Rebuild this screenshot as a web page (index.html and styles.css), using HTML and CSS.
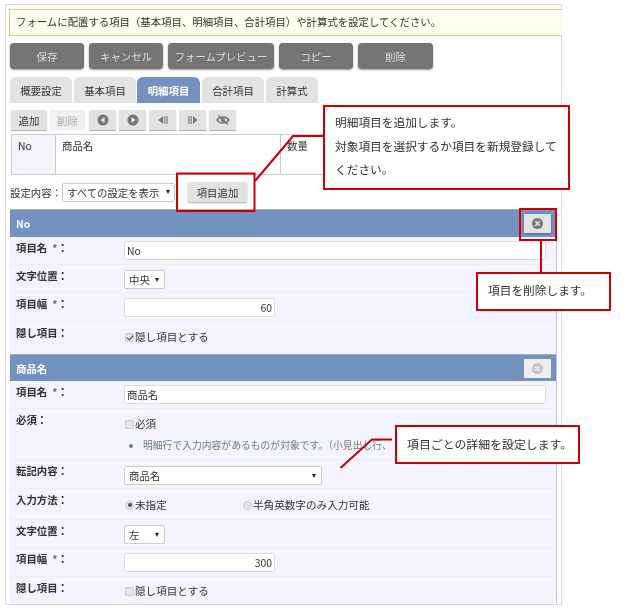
FILE: index.html
```html
<!DOCTYPE html>
<html lang="ja">
<head>
<meta charset="utf-8">
<title>フォーム設定</title>
<link rel="stylesheet" href="styles.css">
</head>
<body>
<div class="frame">
  <div class="notice">フォームに配置する項目（基本項目、明細項目、合計項目）や計算式を設定してください。</div>
  <div class="actions">
    <button class="act w74">保存</button>
    <button class="act w74">キャンセル</button>
    <button class="act w107">フォームプレビュー</button>
    <button class="act w74">コピー</button>
    <button class="act w75">削除</button>
  </div>
  <div class="tabs">
    <span class="tab">概要設定</span>
    <span class="tab">基本項目</span>
    <span class="tab on">明細項目</span>
    <span class="tab">合計項目</span>
    <span class="tab short">計算式</span>
  </div>
  <div class="tools">
    <button class="tool txt">追加</button>
    <button class="tool txt off">削除</button>
    <button class="tool first"><svg width="12" height="12" viewBox="0 0 12 12"><circle cx="6" cy="6" r="5.500" fill="#777"/><path d="M7.500 3.200v5.600L3.600 6z" fill="#eee"/></svg></button>
    <button class="tool"><svg width="12" height="12" viewBox="0 0 12 12"><circle cx="6" cy="6" r="5.500" fill="#777"/><path d="M4.500 3.200v5.600L8.400 6z" fill="#eee"/></svg></button>
    <button class="tool"><svg width="12" height="12" viewBox="0 0 12 12"><path d="M6 2v8L1.500 6z" fill="#777"/><path d="M7.200 2h1.300v8H7.200zM9.500 2h1.300v8H9.500z" fill="#888"/></svg></button>
    <button class="tool"><svg width="12" height="12" viewBox="0 0 12 12"><path d="M6 2v8l4.500-4z" fill="#777"/><path d="M1.200 2h1.300v8H1.200zM3.500 2h1.300v8H3.500z" fill="#888"/></svg></button>
    <button class="tool"><svg width="14" height="12" viewBox="0 0 14 12"><path d="M1 6c3-4 9-4 12 0-3 4-9 4-12 0z" fill="none" stroke="#777" stroke-width="1.300"/><circle cx="7" cy="6" r="2" fill="#777"/><path d="M2.500 1.500l9.500 9" stroke="#777" stroke-width="1.300"/></svg></button>
  </div>
  <div class="grid-head">
    <div class="cell c-no">No</div>
    <div class="cell c-name">商品名</div>
    <div class="cell c-qty">数量</div>
  </div>
  <div class="setting">
    <span class="setting-label">設定内容：</span>
    <span class="select s-all"><span>すべての設定を表示</span><i class="arrow"></i></span>
    <button class="add">項目追加</button>
  </div>

  <section class="panel">
    <header class="bar"><span>No</span><button class="del"><svg width="13" height="13" viewBox="0 0 13 13"><circle cx="6.500" cy="6.500" r="5.500" fill="#777"/><path d="M4.300 4.300l4.400 4.400M8.700 4.300l-4.400 4.400" stroke="#e4e4e4" stroke-width="1.500"/></svg></button></header>
    <div class="row h28"><label class="lab">項目名<em>*</em>：</label><input class="inp full mt4" value="No"></div>
    <div class="row h28"><label class="lab">文字位置：</label><span class="select s-small mt5"><span>中央</span><i class="arrow"></i></span></div>
    <div class="row h29"><label class="lab">項目幅<em>*</em>：</label><input class="inp num mt5" value="60"></div>
    <div class="row h32 last"><label class="lab">隠し項目：</label><span class="opt mt7"><i class="chk on"></i>隠し項目とする</span></div>
  </section>

  <section class="panel">
    <header class="bar b27"><span>商品名</span><button class="del dim"><svg width="13" height="13" viewBox="0 0 13 13"><circle cx="6.500" cy="6.500" r="5.500" fill="#c4c4c4"/><path d="M4.300 4.300l4.400 4.400M8.700 4.300l-4.400 4.400" stroke="#f0f0f0" stroke-width="1.500"/></svg></button></header>
    <div class="row h28"><label class="lab">項目名<em>*</em>：</label><input class="inp full mt4" value="商品名"></div>
    <div class="row h51"><label class="lab">必須：</label>
      <div class="stack mt7">
        <span class="opt"><i class="chk"></i>必須</span>
        <ul class="hint"><li>明細行で入力内容があるものが対象です。（小見出し行、</li></ul>
      </div>
    </div>
    <div class="row h29"><label class="lab">転記内容：</label><span class="select s-wide mt6"><span>商品名</span><i class="arrow"></i></span></div>
    <div class="row h31"><label class="lab">入力方法：</label>
      <span class="opt o-first mt8"><i class="rad on"></i>未指定</span>
      <span class="opt mt8"><i class="rad"></i>半角英数字のみ入力可能</span>
    </div>
    <div class="row h28"><label class="lab">文字位置：</label><span class="select s-small mt5"><span>左</span><i class="arrow"></i></span></div>
    <div class="row h29"><label class="lab">項目幅<em>*</em>：</label><input class="inp num mt5" value="300"></div>
    <div class="row h27 last"><label class="lab">隠し項目：</label><span class="opt mt6"><i class="chk"></i>隠し項目とする</span></div>
  </section>
</div>

<svg class="marks" width="640" height="611" viewBox="0 0 640 611">
  <rect x="177" y="173.500" width="77.500" height="37.500" fill="none" stroke="#cc0000" stroke-width="2"/>
  <path d="M255 181L293 136H323" fill="none" stroke="#cc0000" stroke-width="2"/>
  <rect x="520" y="209" width="36" height="31" fill="none" stroke="#cc0000" stroke-width="2"/>
  <path d="M541 241V273" fill="none" stroke="#cc0000" stroke-width="2"/>
  <path d="M340.500 468L372 439.500H392" fill="none" stroke="#cc0000" stroke-width="2"/>
</svg>
<div class="note n1"><p>明細項目を追加します。</p><p>対象項目を選択するか項目を新規登録して</p><p>ください。</p></div>
<div class="note n2"><p>項目を削除します。</p></div>
<div class="note n3"><p>項目ごとの詳細を設定します。</p></div>
</body>
</html>
```
FILE: styles.css
```css
* { box-sizing: border-box; }
html, body { margin: 0; background: #fff; }
body {
  width: 640px; height: 611px; position: relative; overflow: hidden;
  font-family: "Noto Sans CJK JP", "Liberation Sans", sans-serif;
  font-size: 11px; color: #333;
  filter: blur(0.3px);
}
button { font-family: inherit; margin: 0; padding: 0; border: 0; }

.frame {
  position: absolute; left: 5px; top: 4px; width: 557px; height: 601px;
  border: 1px solid #dcdcdc; padding: 4px 0 0 3px;
}
.notice {
  height: 27px; margin-right: -1px; padding-left: 6px;
  background: #fdfdec; border: 1px solid #cfcf80; border-right: 0;
  font-size: 10.400px; line-height: 24px; color: #333;
}
.actions { display: flex; gap: 5px; margin: 7px 0 0 1px; }
.act {
  height: 26px; border-radius: 4px; background: #747474; color: #ddd;
  font-size: 10.400px; box-shadow: 0 1px 2px #999;
}
.w74 { width: 74px; } .w75 { width: 75px; } .w107 { width: 106px; }

.tabs { display: flex; gap: 2px; margin: 8px 0 0 1px; height: 26px; }
.tab {
  width: 62px; height: 26px; background: #e3e3e3; color: #333;
  border-radius: 6px 6px 0 0; text-align: center; line-height: 27px; font-size: 10.400px;
}
.tab.on { background: #7391c1; color: #fff; font-weight: 700; width: 63px; margin-left: -1px; }
.tab.short { width: 52px; }

.tools { display: flex; gap: 3px; margin: 7px 0 0 2px; height: 21px; }
.tool {
  width: 27px; height: 20px; background: #e3e3e3; box-shadow: 0 1px 1px #aaa;
  display: flex; align-items: center; justify-content: center; border-radius: 1px;
}
.tool.first { margin-left: 1px; }
.tool.txt { width: 36px; font-size: 10.400px; color: #333; }
.tool.off { width: 35px; background: #f0f0f0; box-shadow: none; color: #aaa; }

.grid-head {
  display: flex; height: 41px; margin: 3px 0 0 2px; width: 543px;
  border: 1px solid #cdcdcd; font-size: 10.400px;
}
.cell { padding: 3px 0 0 6px; line-height: 16px; color: #333; }
.c-no { width: 44px; background: #f3f4fd; border-right: 1px solid #cdcdcd; }
.c-name { width: 225px; border-right: 1px solid #cdcdcd; }
.c-qty { padding-left: 6px; flex: 1; }

.setting { display: flex; align-items: center; height: 26px; margin-top: 4px; padding-left: 1px; }
.setting-label { width: 52px; font-size: 10.400px; white-space: nowrap; color: #333; }
.select {
  display: flex; align-items: center; justify-content: space-between; height: 19px;
  background: #fff; border: 1px solid #ccc; border-radius: 2px;
  padding: 0 4px 0 4px; font-size: 10.400px; color: #333;
}
.s-all { width: 113px; }
.s-small { width: 41px; padding-right: 5px; }
.s-wide { width: 198px; padding-right: 5px; }
.arrow {
  width: 0; height: 0; border-left: 2.500px solid transparent; border-right: 2.500px solid transparent;
  border-top: 4px solid #222;
}
.add {
  width: 59px; height: 20px; margin-left: 13px; background: #e3e3e3; color: #333;
  font-size: 10.400px; box-shadow: 0 1px 2px #aaa; border-radius: 1px;
}

.panel { width: 547px; margin-left: 1px; background: #f3f4fd; border-right: 1px solid #c8c8c8; }
.panel:first-of-type { margin-top: 4px; }
.bar {
  display: flex; align-items: center; justify-content: space-between; height: 28px;
  background: #7391c1; color: #fff; font-weight: 700; font-size: 10.400px;
  padding: 0 5px 0 6px; border-top: 1px solid #aaa;
}
.bar.b27 { height: 27px; }
.del {
  width: 27px; height: 19px; background: #e3e3e3; display: flex; align-items: center; justify-content: center;
  box-shadow: 0 1px 2px #4d648c;
}
.del.dim { background: #eeeeee; box-shadow: none; }
.row {
  display: flex; align-items: flex-start; padding-left: 6px; border-bottom: 1px solid #ecedf5;
}
.row.last { border-bottom: 0; }
.h27 { height: 27px; } .h28 { height: 28px; } .h29 { height: 29px; } .h31 { height: 31px; }
.h32 { height: 32px; } .h51 { height: 51px; }
.mt4 { margin-top: 4px; } .mt5 { margin-top: 5px; } .mt6 { margin-top: 6px; }
.mt7 { margin-top: 7px; } .mt8 { margin-top: 8px; }
.lab { width: 108px; flex: none; font-weight: 700; font-size: 10.400px; line-height: 16px; padding-top: 3px; color: #333; }
.lab em { color: #8a5a6a; font-style: normal; margin-left: 5px; }
.inp {
  height: 19px; border: 1px solid #ddd; background: #fff; padding: 0 1px 0 2px; margin-bottom: 0;
  font-family: inherit; font-size: 10.400px; color: #333; border-radius: 2px;
}
.full { width: 422px; }
.num { width: 151px; text-align: right; padding-right: 2px; }
.opt { display: flex; align-items: center; font-size: 10.600px; line-height: 16px; color: #333; white-space: nowrap; }
.o-first { width: 118px; }
.chk, .rad { width: 9px; height: 9px; background: #e4e4e4; border: 1px solid #ccc; margin: 0 1px 0 1px; flex: none; position: relative; }
.chk { border-radius: 2px; }
.rad { border-radius: 50%; }
.chk.on::after {
  content: ""; position: absolute; left: 2px; top: 0; width: 3px; height: 5px;
  border: solid #444; border-width: 0 1.500px 1.500px 0; transform: rotate(40deg);
}
.rad.on::after {
  content: ""; position: absolute; left: 1.500px; top: 1.500px; width: 4px; height: 4px;
  border-radius: 50%; background: #555;
}
.stack { display: flex; flex-direction: column; }
.hint { margin: 5px 0 0; padding: 0 0 0 19px; color: #6c7b8c; font-size: 9.800px; line-height: 16px; white-space: nowrap; }

.marks { position: absolute; left: 0; top: 0; pointer-events: none; }
.note {
  position: absolute; background: #fff; border: 2px solid #cc0000; color: #333;
  font-size: 11.700px; padding-left: 10px;
}
.note p { margin: 0; height: 23.500px; line-height: 23.500px; white-space: nowrap; }
.n1 { left: 323px; top: 105px; width: 247px; height: 85px; padding-top: 3px; }
.n2 { left: 476px; top: 272px; width: 135px; height: 39px; padding-left: 10px; padding-top: 4px; }
.n3 { left: 395px; top: 425px; width: 185px; height: 39px; padding-top: 5px; font-size: 11.900px; }
```
